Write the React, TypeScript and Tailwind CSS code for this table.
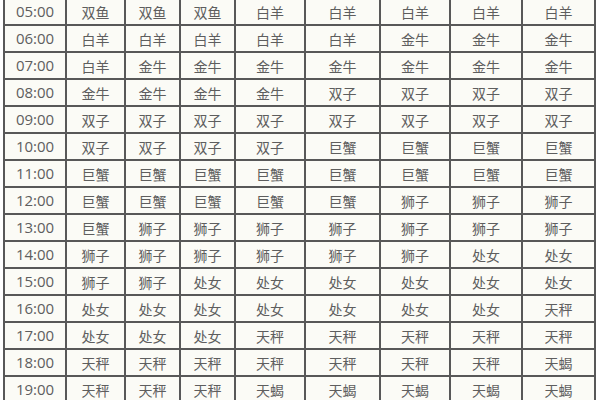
const rows: [string, string[]][] = [
  ["05:00", ["双鱼", "双鱼", "双鱼", "白羊", "白羊", "白羊", "白羊", "白羊"]],
  ["06:00", ["白羊", "白羊", "白羊", "白羊", "白羊", "金牛", "金牛", "金牛"]],
  ["07:00", ["白羊", "金牛", "金牛", "金牛", "金牛", "金牛", "金牛", "金牛"]],
  ["08:00", ["金牛", "金牛", "金牛", "金牛", "双子", "双子", "双子", "双子"]],
  ["09:00", ["双子", "双子", "双子", "双子", "双子", "双子", "双子", "双子"]],
  ["10:00", ["双子", "双子", "双子", "双子", "巨蟹", "巨蟹", "巨蟹", "巨蟹"]],
  ["11:00", ["巨蟹", "巨蟹", "巨蟹", "巨蟹", "巨蟹", "巨蟹", "巨蟹", "巨蟹"]],
  ["12:00", ["巨蟹", "巨蟹", "巨蟹", "巨蟹", "巨蟹", "狮子", "狮子", "狮子"]],
  ["13:00", ["巨蟹", "狮子", "狮子", "狮子", "狮子", "狮子", "狮子", "狮子"]],
  ["14:00", ["狮子", "狮子", "狮子", "狮子", "狮子", "狮子", "处女", "处女"]],
  ["15:00", ["狮子", "狮子", "处女", "处女", "处女", "处女", "处女", "处女"]],
  ["16:00", ["处女", "处女", "处女", "处女", "处女", "处女", "处女", "天秤"]],
  ["17:00", ["处女", "处女", "处女", "天秤", "天秤", "天秤", "天秤", "天秤"]],
  ["18:00", ["天秤", "天秤", "天秤", "天秤", "天秤", "天秤", "天秤", "天蝎"]],
  ["19:00", ["天秤", "天秤", "天秤", "天蝎", "天蝎", "天蝎", "天蝎", "天蝎"]],
];

// 列宽按截图里的竖线位置量出来的
const widths = [62, 59, 55, 55, 70, 75, 70, 72, 73];

export default function App() {
  return (
    <div className="h-[400px] w-[600px] overflow-hidden bg-white pl-[3px]">
      <table
        className="-mt-[3px] table-fixed border-collapse bg-[#fbfbf6] text-[#5e5e5e] [font-family:'Noto_Sans_CJK_SC','Liberation_Sans',sans-serif]"
        style={{ width: widths.reduce((a, b) => a + b, 0) }}
      >
        <colgroup>
          {widths.map((w, i) => (
            <col key={i} style={{ width: w }} />
          ))}
        </colgroup>
        <tbody>
          {rows.map(([time, signs]) => (
            <tr key={time} className="h-[27px]">
              <td className="border-2 border-[#585858] p-0 text-center text-[15px] leading-none [font-family:'Open_Sans','Liberation_Sans',sans-serif]">
                {time}
              </td>
              {signs.map((s, i) => (
                <td
                  key={i}
                  className="border-2 border-[#585858] p-0 text-center text-[14px] leading-none"
                >
                  {s}
                </td>
              ))}
            </tr>
          ))}
        </tbody>
      </table>
    </div>
  );
}
